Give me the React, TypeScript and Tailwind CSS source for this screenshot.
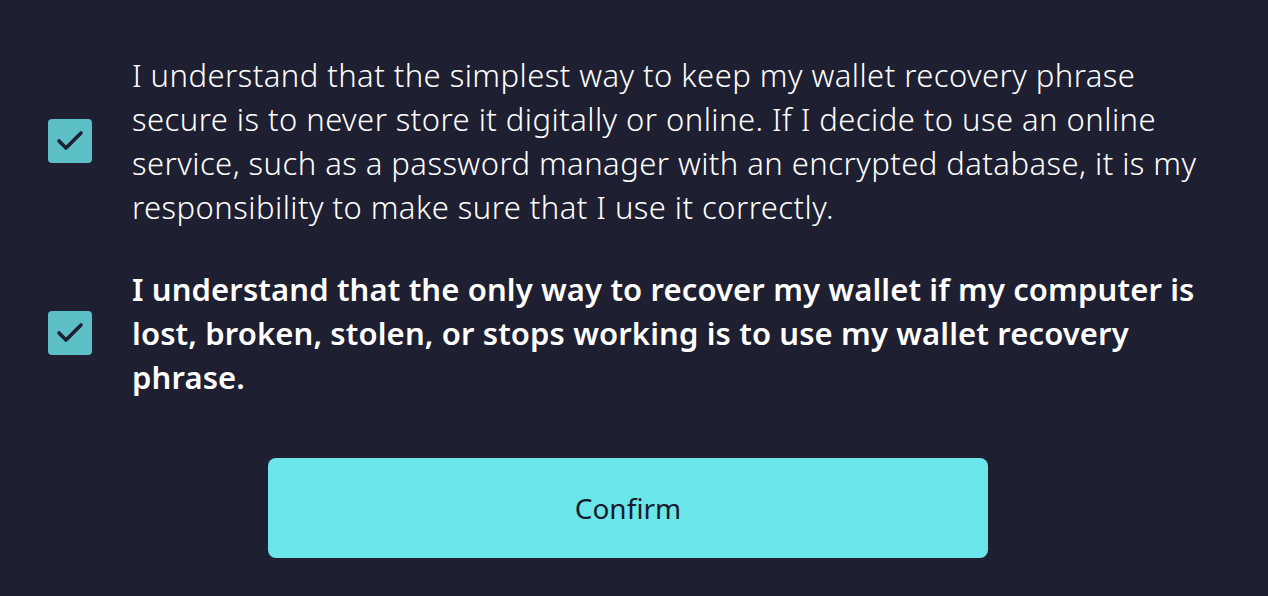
type Item = {
  text: string;
  bold?: boolean;
};

const items: Item[] = [
  {
    text: 'I understand that the simplest way to keep my wallet recovery phrase secure is to never store it digitally or online. If I decide to use an online service, such as a password manager with an encrypted database, it is my responsibility to make sure that I use it correctly.'
  },
  {
    text: 'I understand that the only way to recover my wallet if my computer is lost, broken, stolen, or stops working is to use my wallet recovery phrase.',
    bold: true
  }
];

function CheckRow({ item }: { item: Item }) {
  return (
    <div className="flex items-center gap-10">
      <div className="h-11 w-11 shrink-0 rounded-[4px] bg-[#5bbfc5]">
        <svg width="44" height="44" viewBox="0 0 44 44">
          <path
            d="M11 22 L18 29 L33 14"
            fill="none"
            stroke="#1f1f33"
            strokeWidth="3.6"
            strokeLinecap="round"
            strokeLinejoin="round"
          />
        </svg>
      </div>
      <p
        className={
          'text-[31px] leading-[44px] text-white ' +
          (item.bold ? 'font-semibold tracking-[0.12px]' : 'font-light tracking-[0.45px]')
        }
      >
        {item.text}
      </p>
    </div>
  );
}

export default function App() {
  return (
    <div
      className="flex h-[596px] w-full flex-col bg-[#1f1f32] pl-12 pr-14 pt-[53px]"
      style={{ fontFamily: '"Noto Sans", sans-serif' }}
    >
      <div className="flex flex-col gap-[38px]">
        {items.map((item, i) => (
          <CheckRow key={i} item={item} />
        ))}
      </div>
      <div className="mt-[59px] flex justify-center pr-1">
        <button className="h-[100px] w-[720px] rounded-lg bg-[#6ae6ea] text-[28px] text-[#1a1a2e]">
          Confirm
        </button>
      </div>
    </div>
  );
}
